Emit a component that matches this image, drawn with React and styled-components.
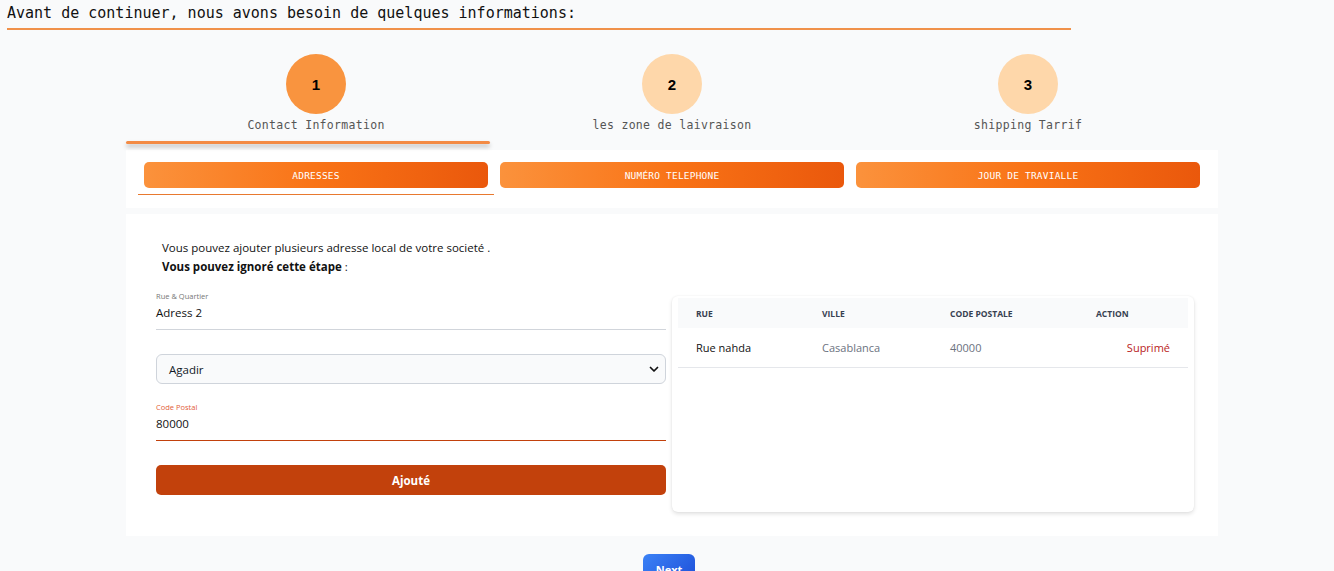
import styled, { createGlobalStyle } from "styled-components";

const GlobalStyle = createGlobalStyle`
    body {
        margin: 0;
        background: #f9fafb;
        font-family: "Open Sans", sans-serif;
        color: #111827;
    }
`;

const steps = [
    { num: 1, label: "Contact Information", active: true },
    { num: 2, label: "les zone de laivraison" },
    { num: 3, label: "shipping Tarrif" },
];

const tabs = ["Adresses", "Numéro telephone", "Jour de travialle"];

const rows = [
    { rue: "Rue nahda", ville: "Casablanca", code: "40000" },
];

const App = () => {
    return (
        <Page>
            <GlobalStyle />
            <Header>
                <HeaderTitle>Avant de continuer, nous avons besoin de quelques informations:</HeaderTitle>
            </Header>

            <Wrapper>
                <Stepper>
                    {steps.map((s) => (
                        <Step key={s.num} active={s.active}>
                            <Circle active={s.active}>{s.num}</Circle>
                            <StepLabel>{s.label}</StepLabel>
                        </Step>
                    ))}
                </Stepper>

                <TabsCard>
                    {tabs.map((t, i) => (
                        <TabSlot key={t} active={i === 0}>
                            <TabButton>{t}</TabButton>
                        </TabSlot>
                    ))}
                </TabsCard>

                <MainCard>
                    <Intro>
                        Vous pouvez ajouter plusieurs adresse local de votre societé .
                        <br />
                        <strong>Vous pouvez ignoré cette étape</strong> :
                    </Intro>

                    <Columns>
                        <Form>
                            <Field>
                                <FieldLabel>Rue &amp; Quartier</FieldLabel>
                                <FieldValue>Adress 2</FieldValue>
                            </Field>

                            <SelectBox>
                                <span>Agadir</span>
                                <svg width="12" height="12" viewBox="0 0 24 24" fill="none" stroke="#111" strokeWidth="3.5" strokeLinecap="round" strokeLinejoin="round">
                                    <path d="M5 9l7 7 7-7" />
                                </svg>
                            </SelectBox>

                            <Field focused>
                                <FieldLabel focused>Code Postal</FieldLabel>
                                <FieldValue>80000</FieldValue>
                            </Field>

                            <SubmitButton>Ajouté</SubmitButton>
                        </Form>

                        <TableCard>
                            <Table>
                                <thead>
                                    <tr>
                                        <Th>Rue</Th>
                                        <Th>Ville</Th>
                                        <Th>Code postale</Th>
                                        <Th>Action</Th>
                                    </tr>
                                </thead>
                                <tbody>
                                    {rows.map((r) => (
                                        <tr key={r.rue}>
                                            <Td strong>{r.rue}</Td>
                                            <Td>{r.ville}</Td>
                                            <Td>{r.code}</Td>
                                            <Td align="right"><DeleteLink>Suprimé</DeleteLink></Td>
                                        </tr>
                                    ))}
                                </tbody>
                            </Table>
                        </TableCard>
                    </Columns>
                </MainCard>

                <Footer>
                    <NextButton>Next</NextButton>
                </Footer>
            </Wrapper>
        </Page>
    );
}

const Page = styled.div`
    height: 571px;
    overflow: hidden;
`;

const Header = styled.div`
    padding: 3px 0 0 7px;
    width: 1064px;
`;

const HeaderTitle = styled.h1`
    margin: 0;
    font-family: "DejaVu Sans Mono", monospace;
    font-weight: normal;
    font-size: 15px;
    line-height: 20px;
    color: #111;
    padding-bottom: 5px;
    border-bottom: 2px solid #f0914a;
`;

const Wrapper = styled.div`
    width: 1092px;
    margin: 0 0 0 126px;
`;

const Stepper = styled.div`
    display: grid;
    grid-template-columns: repeat(3, 1fr);
    padding: 24px 12px 0;
    height: 95px;
`;

const Step = styled.div`
    position: relative;
    display: flex;
    flex-direction: column;
    align-items: center;

    &::after {
        content: "";
        display: ${({ active }) => (active ? "block" : "none")};
        position: absolute;
        left: -12px;
        width: 364px;
        top: 87px;
        height: 3px;
        border-radius: 2px;
        background: #f38b45;
        box-shadow: 0 3px 4px rgba(0, 0, 0, 0.25);
    }
`;

const Circle = styled.div`
    width: 60px;
    height: 60px;
    border-radius: 50%;
    background: ${({ active }) => (active ? "#f9943f" : "#fed7aa")};
    display: flex;
    align-items: center;
    justify-content: center;
    font-family: "Liberation Sans", sans-serif;
    font-weight: bold;
    font-size: 15px;
    color: #000;
`;

const StepLabel = styled.div`
    margin-top: 4px;
    font-family: "DejaVu Sans Mono", monospace;
    font-size: 11.5px;
    color: #555;
    letter-spacing: 0.3px;
`;

const TabsCard = styled.div`
    background: #fff;
    display: grid;
    grid-template-columns: repeat(3, 1fr);
    padding: 12px 12px 13px;
    margin-top: 1px;
`;

const TabSlot = styled.div`
    padding: 0 6px 6px;
    border-bottom: 1px solid ${({ active }) => (active ? "#e8792f" : "transparent")};
`;

const TabButton = styled.div`
    height: 26px;
    border-radius: 5px;
    background: linear-gradient(90deg, #fb923c 0%, #f97316 50%, #ea580c 100%);
    color: #fff;
    display: flex;
    align-items: center;
    justify-content: center;
    text-transform: uppercase;
    font-family: "DejaVu Sans Mono", monospace;
    font-size: 9.5px;
    letter-spacing: 0.2px;
`;

const MainCard = styled.div`
    background: #fff;
    margin-top: 6px;
    padding: 24px 24px 24px 30px;
`;

const Intro = styled.p`
    margin: 0 0 15px 6px;
    font-size: 11.5px;
    line-height: 19px;
    color: #111;

    strong {
        font-weight: 700;
    }
`;

const Columns = styled.div`
    display: grid;
    grid-template-columns: 510px 1fr;
    gap: 6px;
    align-items: start;
`;

const Form = styled.div`
    display: flex;
    flex-direction: column;
`;

const Field = styled.div`
    border-bottom: 1px solid ${({ focused }) => (focused ? "#c2410c" : "#d1d5db")};
    padding-bottom: 8px;
    margin-bottom: 24px;
`;

const FieldLabel = styled.div`
    font-size: 7.5px;
    line-height: 10px;
    color: ${({ focused }) => (focused ? "#e2603a" : "#777")};
    margin-bottom: 4px;
`;

const FieldValue = styled.div`
    font-size: 11.5px;
    line-height: 16px;
    color: #111;
`;

const SelectBox = styled.div`
    height: 30px;
    box-sizing: border-box;
    border: 1px solid #cfd4db;
    border-radius: 6px;
    background: #f9fafb;
    display: flex;
    align-items: center;
    justify-content: space-between;
    padding: 0 5px 0 12px;
    font-size: 11.5px;
    margin-bottom: 18px;
`;

const SubmitButton = styled.button`
    height: 30px;
    border: none;
    border-radius: 5px;
    background: #c2410c;
    color: #fff;
    font-family: "Open Sans", sans-serif;
    font-weight: 700;
    font-size: 11.5px;
    margin-top: 0;
`;

const TableCard = styled.div`
    margin-top: 5px;
    background: #fff;
    border-radius: 6px;
    box-shadow: 0 2px 4px rgba(0, 0, 0, 0.12), 0 0 2px rgba(0, 0, 0, 0.06);
    padding: 2px 6px 0;
    height: 214px;
`;

const Table = styled.table`
    width: 100%;
    border-collapse: collapse;

    thead tr {
        background: #f9fafb;
    }

    tbody tr {
        border-bottom: 1px solid #e5e7eb;
    }
`;

const Th = styled.th`
    text-align: left;
    text-transform: uppercase;
    font-size: 8.5px;
    font-weight: 700;
    color: #374151;
    height: 30px;
    padding: 0 18px;
    &:nth-child(1) { width: 90px; }
    &:nth-child(2) { width: 92px; }
    &:nth-child(3) { width: 110px; }
`;

const Td = styled.td`
    font-size: 11px;
    height: 39px;
    padding: 0 18px;
    color: ${({ strong }) => (strong ? "#111" : "#6b7280")};
    text-align: ${({ align }) => align || "left"};
`;

const DeleteLink = styled.span`
    color: #b91c1c;
`;

const Footer = styled.div`
    display: flex;
    justify-content: center;
    padding-top: 18px;
    margin-left: -6px;
`;

const NextButton = styled.button`
    width: 52px;
    height: 30px;
    border: none;
    border-radius: 6px;
    background: linear-gradient(135deg, #3b82f6, #1d4ed8);
    color: #fff;
    font-family: "Open Sans", sans-serif;
    font-weight: 700;
    font-size: 11px;
`;

export default App;
